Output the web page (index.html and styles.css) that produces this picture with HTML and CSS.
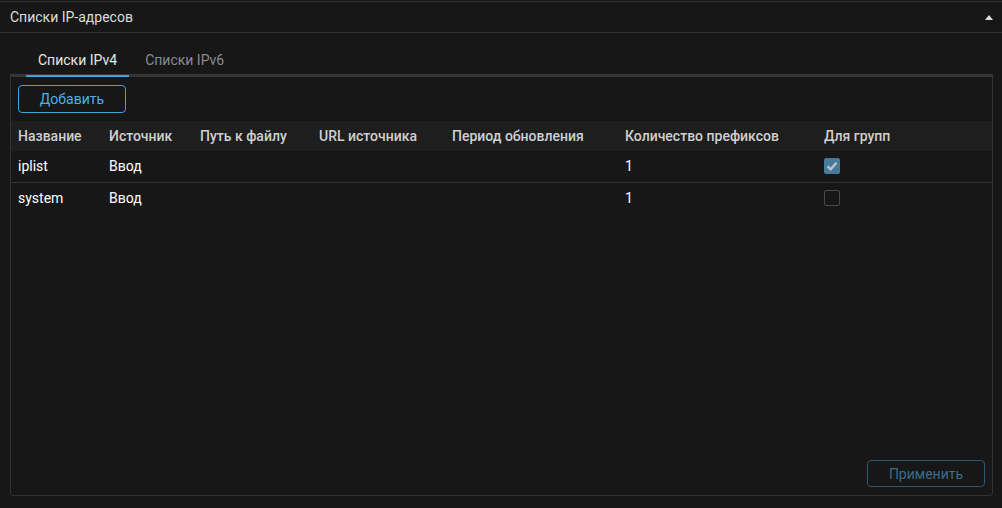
FILE: index.html
```html
<!DOCTYPE html>
<html lang="ru">
<head>
  <meta charset="UTF-8">
  <title>Списки IP-адресов</title>
  <link rel="stylesheet" href="styles.css">
</head>
<body>

<section class="panel">
  <header class="panel-head">
    <span>Списки IP-адресов</span>
    <span class="caret"></span>
  </header>

  <div class="panel-body">
    <nav class="tabs">
      <a href="#" class="tab active">Списки IPv4</a>
      <a href="#" class="tab">Списки IPv6</a>
    </nav>

    <div class="tab-content">
      <button class="btn">Добавить</button>

      <table class="grid">
        <colgroup>
          <col style="width:91px">
          <col style="width:91px">
          <col style="width:119px">
          <col style="width:133px">
          <col style="width:173px">
          <col style="width:199px">
          <col>
        </colgroup>
        <thead>
          <tr>
            <th>Название</th>
            <th>Источник</th>
            <th>Путь к файлу</th>
            <th>URL источника</th>
            <th>Период обновления</th>
            <th>Количество префиксов</th>
            <th>Для групп</th>
          </tr>
        </thead>
        <tbody>
          <tr>
            <td>iplist</td>
            <td>Ввод</td>
            <td></td>
            <td></td>
            <td></td>
            <td>1</td>
            <td><span class="check on"><svg viewBox="0 0 16 16" width="16" height="16"><path d="M3.5 8.3 6.6 11.3 12.5 4.8" fill="none" stroke="#c4c4c4" stroke-width="2.4"/></svg></span></td>
          </tr>
          <tr>
            <td>system</td>
            <td>Ввод</td>
            <td></td>
            <td></td>
            <td></td>
            <td>1</td>
            <td><span class="check"></span></td>
          </tr>
        </tbody>
      </table>

      <div class="actions">
        <button class="btn btn-apply" disabled>Применить</button>
      </div>
    </div>
  </div>
</section>

</body>
</html>
```

FILE: styles.css
```css
body {
  margin: 0;
  padding-top: 1px;
  background-color: #171717;
  font-family: Roboto, 'Liberation Sans', sans-serif;
  font-size: 14px;
  color: #e0e0e0;
}

.panel-head {
  height: 30px;
  border-top: 1px solid #333;
  border-bottom: 1px solid #333;
  display: flex;
  justify-content: space-between;
  align-items: center;
  padding: 0 9px 0 10px;
  color: #dcdcdc;
}

.caret {
  width: 0;
  height: 0;
  border-left: 4px solid transparent;
  border-right: 4px solid transparent;
  border-bottom: 5px solid #ddd;
}

.panel-body {
  padding: 0 9px 0 10px;
  height: 463px;
  display: flex;
  flex-direction: column;
}

.tabs {
  display: flex;
  gap: 4px;
  margin-top: 12px;
  padding-left: 16px;
  border-bottom: 3px solid #353535;
}

.tab {
  padding: 7px 12px;
  color: #8a8a8a;
  text-decoration: none;
  margin-bottom: -3px;
  border-bottom: 2px solid transparent;
}

.tab.active {
  color: #e6e6e6;
  border-bottom-color: #3fa3dc;
}

.tab-content {
  flex: 1;
  border: 1px solid #333;
  border-top: none;
  border-radius: 0 0 4px 4px;
  display: flex;
  flex-direction: column;
  padding-top: 8px;
}

.btn {
  font-family: inherit;
  font-size: 14px;
  background: transparent;
  border: 1px solid #3fa3dc;
  border-radius: 4px;
  color: #4fb0e6;
  height: 28px;
  width: 108px;
  margin-left: 7px;
  cursor: pointer;
}

.grid {
  width: 100%;
  margin-top: 8px;
  border-collapse: collapse;
  table-layout: fixed;
}

.grid th {
  height: 30px;
  background-color: #1e1e1e;
  text-align: left;
  font-weight: 500;
  color: #cfcfcf;
  padding: 0 0 0 7px;
  white-space: nowrap;
}

.grid td {
  height: 29px;
  padding: 0 0 2px 7px;
  font-weight: 400;
  color: #fff;
  border-bottom: 1px solid #333;
}

.grid tbody tr:last-child td {
  border-bottom: none;
}

.check {
  display: block;
  width: 14px;
  height: 14px;
  border: 1px solid #4a4a4a;
  border-radius: 2px;
}

.check.on {
  background-color: #457a9c;
  border-color: #457a9c;
}

.check svg {
  display: block;
  margin: -1px;
}

.actions {
  margin-top: auto;
  display: flex;
  justify-content: flex-end;
  padding: 0 7px 8px 0;
}

.btn-apply {
  width: 118px;
  height: 27px;
  border-color: #2b5870;
  color: #3b6e86;
  cursor: default;
}
```
